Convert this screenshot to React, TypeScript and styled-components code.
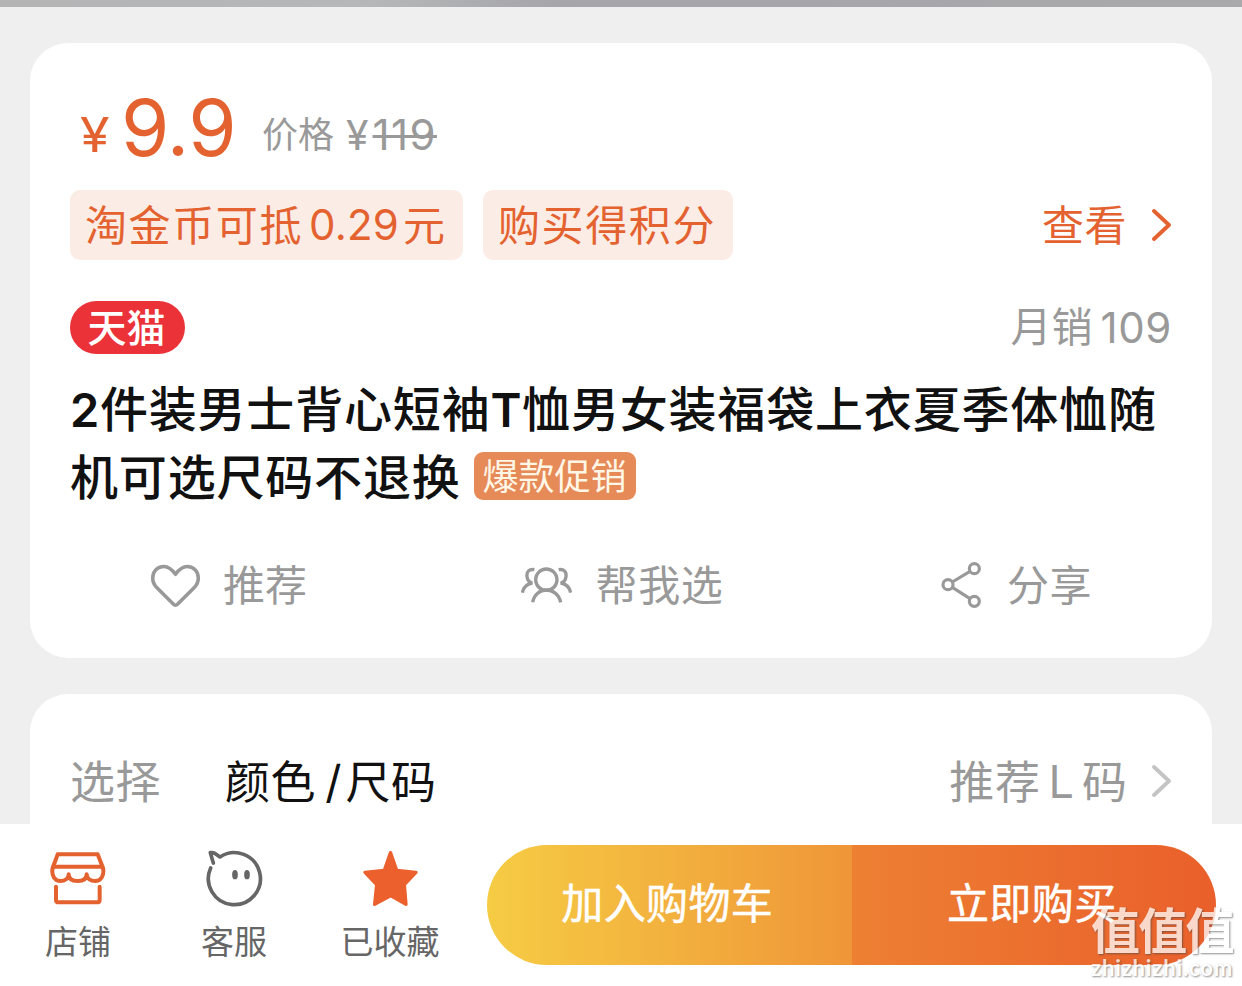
import React from 'react'
import styled, { createGlobalStyle } from 'styled-components'

const GlobalStyle = createGlobalStyle`
  body {
    margin: 0;
    background: #efefef;
    font-family: Inter, 'Noto Sans CJK SC', sans-serif;
  }
`

const Screen = styled.main`
  display: flex;
  flex-direction: column;
  width: 1242px;
  height: 986px;
  overflow: hidden;
  position: relative;
  background: #efefef;
`

const GalleryEdge = styled.div`
  flex: none;
  height: 7px;
  background: linear-gradient(90deg, #b4b4b5, #b6b7b9 30%, #a5a5aa 45%, #a9a9ac);
`

const Content = styled.div`
  flex: 1;
  min-height: 0;
  display: flex;
  flex-direction: column;
  gap: 36px;
  padding: 36px 30px 0;
  overflow: hidden;
`

const Card = styled.section`
  flex: none;
  height: 615px;
  border-radius: 38px;
  background: #fff;
`

const OptionCard = styled(Card)`
  height: 200px;
`

type TextProps = {
  $size?: number
  $color?: string
  $spacing?: number
  $weight?: number
}

const Text = styled.span<TextProps>`
  font-size: ${p => p.$size || 42}px;
  color: ${p => p.$color || '#999'};
  letter-spacing: ${p => p.$spacing || 0}px;
  font-weight: ${p => p.$weight || 400};
  line-height: 1;
  white-space: nowrap;
`

/* Chinese glyphs sit slightly high in the line box */
const Label = styled(Text)`
  padding-top: 2px;
`

const PriceRow = styled.div`
  display: flex;
  align-items: baseline;
  height: 147px;
  padding: 0 40px;
  line-height: 170px;
  box-sizing: border-box;
`

const Currency = styled(Text)`
  width: 41px;
  margin-left: 10px;
  transform: translateY(-4px) scaleX(1.12);
  transform-origin: left;
`

const Price = styled(Text)`
  width: 141px;
  line-height: 170px;
`

const PriceLabel = styled(Text)`
  margin-right: 12px;
  transform: translateY(-8px);
`

const OldPrice = styled(Text)`
  transform: translateY(-6px);
`

const Struck = styled(OldPrice)`
  margin-left: 4px;
  text-decoration: line-through;
  text-decoration-thickness: 3px;
`

const TagRow = styled.div`
  display: flex;
  align-items: center;
  gap: 20px;
  height: 70px;
  padding: 0 40px;
`

const Tag = styled.span<{ $width: number }>`
  display: flex;
  align-items: center;
  box-sizing: border-box;
  width: ${p => p.$width}px;
  height: 70px;
  padding-left: 15px;
  border-radius: 10px;
  background: #fbece6;
`

const Amount = styled(Text)`
  margin: 0 4px 0 6px;
`

const More = styled.a`
  display: flex;
  align-items: center;
  margin-left: auto;
  gap: 25px;
`

const ShopRow = styled.div`
  display: flex;
  align-items: center;
  justify-content: space-between;
  height: 53px;
  margin-top: 41px;
  padding: 0 40px;
`

const Tmall = styled.span`
  display: flex;
  align-items: center;
  justify-content: center;
  box-sizing: border-box;
  width: 115px;
  height: 53px;
  padding-right: 2px;
  border-radius: 27px;
  background: #eb3239;
  color: #fff;
  font-size: 39px;
  font-weight: 500;
  line-height: 1;
`

const Sales = styled.div`
  display: flex;
  align-items: center;
  gap: 8px;
`

const Title = styled.h1`
  margin: 22px 0 0;
  padding: 0 0 0 40px;
  height: 136px;
  font-size: 48px;
  font-weight: 500;
  line-height: 68px;
  letter-spacing: 0.82px;
  color: #111;
  white-space: nowrap;
`

const TitleLine = styled.div`
  display: flex;
  align-items: center;
  height: 68px;
`

const Latin = styled.span`
  font-size: 47px;
  font-weight: 600;
  letter-spacing: 0.6px;
`

const Promo = styled.span`
  display: flex;
  align-items: center;
  justify-content: center;
  box-sizing: border-box;
  width: 162px;
  height: 48px;
  padding-top: 2px;
  margin: -4px 0 0 13px;
  border-radius: 9px;
  background: #e68a58;
  color: #fff6e6;
  font-size: 36px;
  font-weight: 400;
  line-height: 1;
  letter-spacing: 0;
`

const Actions = styled.div`
  display: grid;
  grid-template-columns: repeat(3, 1fr);
  height: 145px;
`

const Action = styled.a<{ $gap?: number }>`
  display: flex;
  align-items: center;
  justify-content: center;
  gap: ${p => p.$gap || 22}px;
  padding-left: 3px;
  color: #999;

  svg {
    display: block;
  }
`

const OptionRow = styled.div`
  display: flex;
  align-items: center;
  height: 70px;
  padding: 52px 40px 0;
`

const OptionLabel = styled(Label)`
  width: 155px;
`

const Slash = styled(Text)`
  margin: 0 4px 0 9px;
`

const Size = styled.span`
  display: flex;
  align-items: center;
  gap: 8px;
`

const BottomBar = styled.footer`
  flex: none;
  display: flex;
  height: 162px;
  background: #fff;
`

const BarItem = styled.a`
  display: flex;
  flex-direction: column;
  align-items: center;
  width: 156px;
  padding-top: 26px;
`

const BarIcon = styled.span`
  display: flex;
  align-items: center;
  justify-content: center;
  height: 57px;
  margin-bottom: 17px;
`

const Buttons = styled.div`
  display: flex;
  width: 729px;
  height: 120px;
  margin: 21px 0 0 19px;
  border-radius: 60px;
  overflow: hidden;
`

const BuyButton = styled.button<{ $from: string; $to: string }>`
  flex: 1;
  border: 0;
  padding: 0 4px 2px 0;
  background: linear-gradient(90deg, ${p => p.$from}, ${p => p.$to});
  color: #fff;
  font: 400 42px/1 Inter, 'Noto Sans CJK SC', sans-serif;
  letter-spacing: 0.4px;
  -webkit-text-stroke: 0.5px #fff;
`

const Watermark = styled.div`
  position: absolute;
  left: 1091px;
  top: 901px;
  display: flex;
  flex-direction: column;
  color: #fff;
  opacity: 0.75;
  text-shadow: 1px 1px 2px rgba(70, 70, 70, 0.8);
`

const WatermarkName = styled.span`
  font: 700 49px/54px 'Noto Sans CJK SC', sans-serif;
  letter-spacing: -1.8px;
`

const WatermarkUrl = styled.span`
  padding-top: 3px;
  font: 700 22px/20px Lato, sans-serif;
  letter-spacing: 0.85px;
`

const Chevron = ({ color }: { color: string }) => (
  <svg width="20" height="32" viewBox="0 0 20 32" fill="none" stroke={color} strokeWidth="3.8" strokeLinecap="round" strokeLinejoin="round">
    <path d="M2 2 17 16 2 30" />
  </svg>
)

const HeartIcon = () => (
  <svg width="51" height="44" viewBox="0.3 -0.5 51 44" fill="none" stroke="currentColor" strokeWidth="3.6" strokeLinejoin="round">
    <path d="M25.8 10.8C22 5.5 18.5 3 14 3C7.5 3 3 8.2 3 14.5C3 18.5 4.5 21.5 7 24L23.8 40.8C25 42 26.6 42 27.8 40.8L44.6 24C47.1 21.5 48.6 18.5 48.6 14.5C48.6 8.2 44.1 3 37.6 3C33.1 3 29.6 5.5 25.8 10.8Z" />
  </svg>
)

const PeopleIcon = () => (
  <svg width="52" height="38" viewBox="62 77 156 114" fill="none" stroke="currentColor" strokeWidth="10">
    <circle cx="138" cy="118" r="32" />
    <path d="M97 186C101 162 119 149 138 149C157 149 176 162 181 186" />
    <path d="M102 88C87 85 78 94 80 109C81 119 85 125 96 128C80 131 69 141 66 157" />
    <path d="M175 88C190 85 199 94 197 109C196 119 192 125 181 128C197 131 208 141 211 157" />
  </svg>
)

const ShareIcon = () => (
  <svg width="40" height="46" viewBox="65 66 120 138" fill="none" stroke="currentColor" strokeWidth="9.5">
    <circle cx="165" cy="86" r="15" />
    <circle cx="86" cy="134" r="15" />
    <circle cx="165" cy="184" r="15" />
    <path d="M99 126 152 94M99 142 152 176" />
  </svg>
)

const StoreIcon = () => (
  <svg width="57" height="55" viewBox="149 92 171 165" fill="none" stroke="#e4622f" strokeWidth="12" strokeLinecap="round" strokeLinejoin="round">
    <path d="M172 102L157 143C152 168 165 182 180 182C194 182 205 174 205 162C205 176 216 182 232 182C248 182 259 176 259 162C259 174 270 182 285 182C300 182 313 168 308 143L292 102Z" />
    <path d="M159 139H306M167 199V238Q167 246 175 246H290Q298 246 298 238V199" />
  </svg>
)

const ServiceIcon = () => (
  <svg width="57" height="57" viewBox="619 89 171 171" fill="none" stroke="#666" strokeWidth="11" strokeLinecap="round" strokeLinejoin="round">
    <path d="M633 143A78 78 0 1 0 661 110L647 100Q640 96 632 97L641 128" />
    <ellipse cx="706" cy="163" rx="8.5" ry="14" fill="#666" stroke="none" />
    <ellipse cx="742" cy="163" rx="8.5" ry="14" fill="#666" stroke="none" />
  </svg>
)

const StarIcon = () => (
  <svg width="57" height="57" viewBox="1086 90 171 171" fill="#eb602d" stroke="#eb602d" strokeWidth="10" strokeLinejoin="round">
    <path d="M1171.500 98L1190 151L1248 157L1213 194L1218 253L1171.500 227L1124 253L1130 194L1095 157L1153 151Z" />
  </svg>
)

const orange = '#e4622f'

const App = () => (
  <Screen>
    <GlobalStyle />
    <GalleryEdge />
    <Content>
      <Card>
        <PriceRow>
          <Currency $size={48} $color={orange}>¥</Currency>
          <Price $size={78} $color={orange} $spacing={-0.6}>9.9</Price>
          <PriceLabel $size={36}>价格</PriceLabel>
          <OldPrice $size={41}>¥</OldPrice>
          <Struck $size={42} $spacing={1.4}>119</Struck>
        </PriceRow>
        <TagRow>
          <Tag $width={393}>
            <Label $color={orange} $spacing={1.6}>淘金币可抵</Label>
            <Amount $color={orange} $spacing={0.2}>0.29</Amount>
            <Label $color={orange}>元</Label>
          </Tag>
          <Tag $width={250}>
            <Label $color={orange} $spacing={1.6}>购买得积分</Label>
          </Tag>
          <More>
            <Label $color={orange} $spacing={0.5}>查看</Label>
            <Chevron color={orange} />
          </More>
        </TagRow>
        <ShopRow>
          <Tmall>天猫</Tmall>
          <Sales>
            <Text $size={41}>月销</Text>
            <Text $spacing={0.6}>109</Text>
          </Sales>
        </ShopRow>
        <Title>
          <TitleLine>
            <Latin>2</Latin>件装男士背心短袖<Latin>T</Latin>恤男女装福袋上衣夏季体恤随
          </TitleLine>
          <TitleLine>
            机可选尺码不退换
            <Promo>爆款促销</Promo>
          </TitleLine>
        </Title>
        <Actions>
          <Action>
            <HeartIcon />
            <Label>推荐</Label>
          </Action>
          <Action>
            <PeopleIcon />
            <Label $spacing={0.7}>帮我选</Label>
          </Action>
          <Action $gap={26}>
            <ShareIcon />
            <Label $spacing={0.5}>分享</Label>
          </Action>
        </Actions>
      </Card>
      <OptionCard>
        <OptionRow>
          <OptionLabel $size={45} $spacing={0.6}>选择</OptionLabel>
          <Label $size={45} $color="#111" $spacing={0.6}>颜色</Label>
          <Slash $size={45} $color="#111">/</Slash>
          <Label $size={45} $color="#111" $spacing={0.6}>尺码</Label>
          <More>
            <Size>
              <Label $size={45} $spacing={0.6}>推荐</Label>
              <Text $size={45}>L</Text>
              <Label $size={45}>码</Label>
            </Size>
            <Chevron color="#c4c4c4" />
          </More>
        </OptionRow>
      </OptionCard>
    </Content>
    <BottomBar>
      <BarItem>
        <BarIcon><StoreIcon /></BarIcon>
        <Label $size={33} $color="#666">店铺</Label>
      </BarItem>
      <BarItem>
        <BarIcon><ServiceIcon /></BarIcon>
        <Label $size={33} $color="#666">客服</Label>
      </BarItem>
      <BarItem>
        <BarIcon><StarIcon /></BarIcon>
        <Label $size={33} $color="#666">已收藏</Label>
      </BarItem>
      <Buttons>
        <BuyButton $from="#f6cc44" $to="#ef9638">加入购物车</BuyButton>
        <BuyButton $from="#ed8033" $to="#ea5f2b">立即购买</BuyButton>
      </Buttons>
    </BottomBar>
    <Watermark>
      <WatermarkName>值值值</WatermarkName>
      <WatermarkUrl>zhizhizhi.com</WatermarkUrl>
    </Watermark>
  </Screen>
)

export default App
